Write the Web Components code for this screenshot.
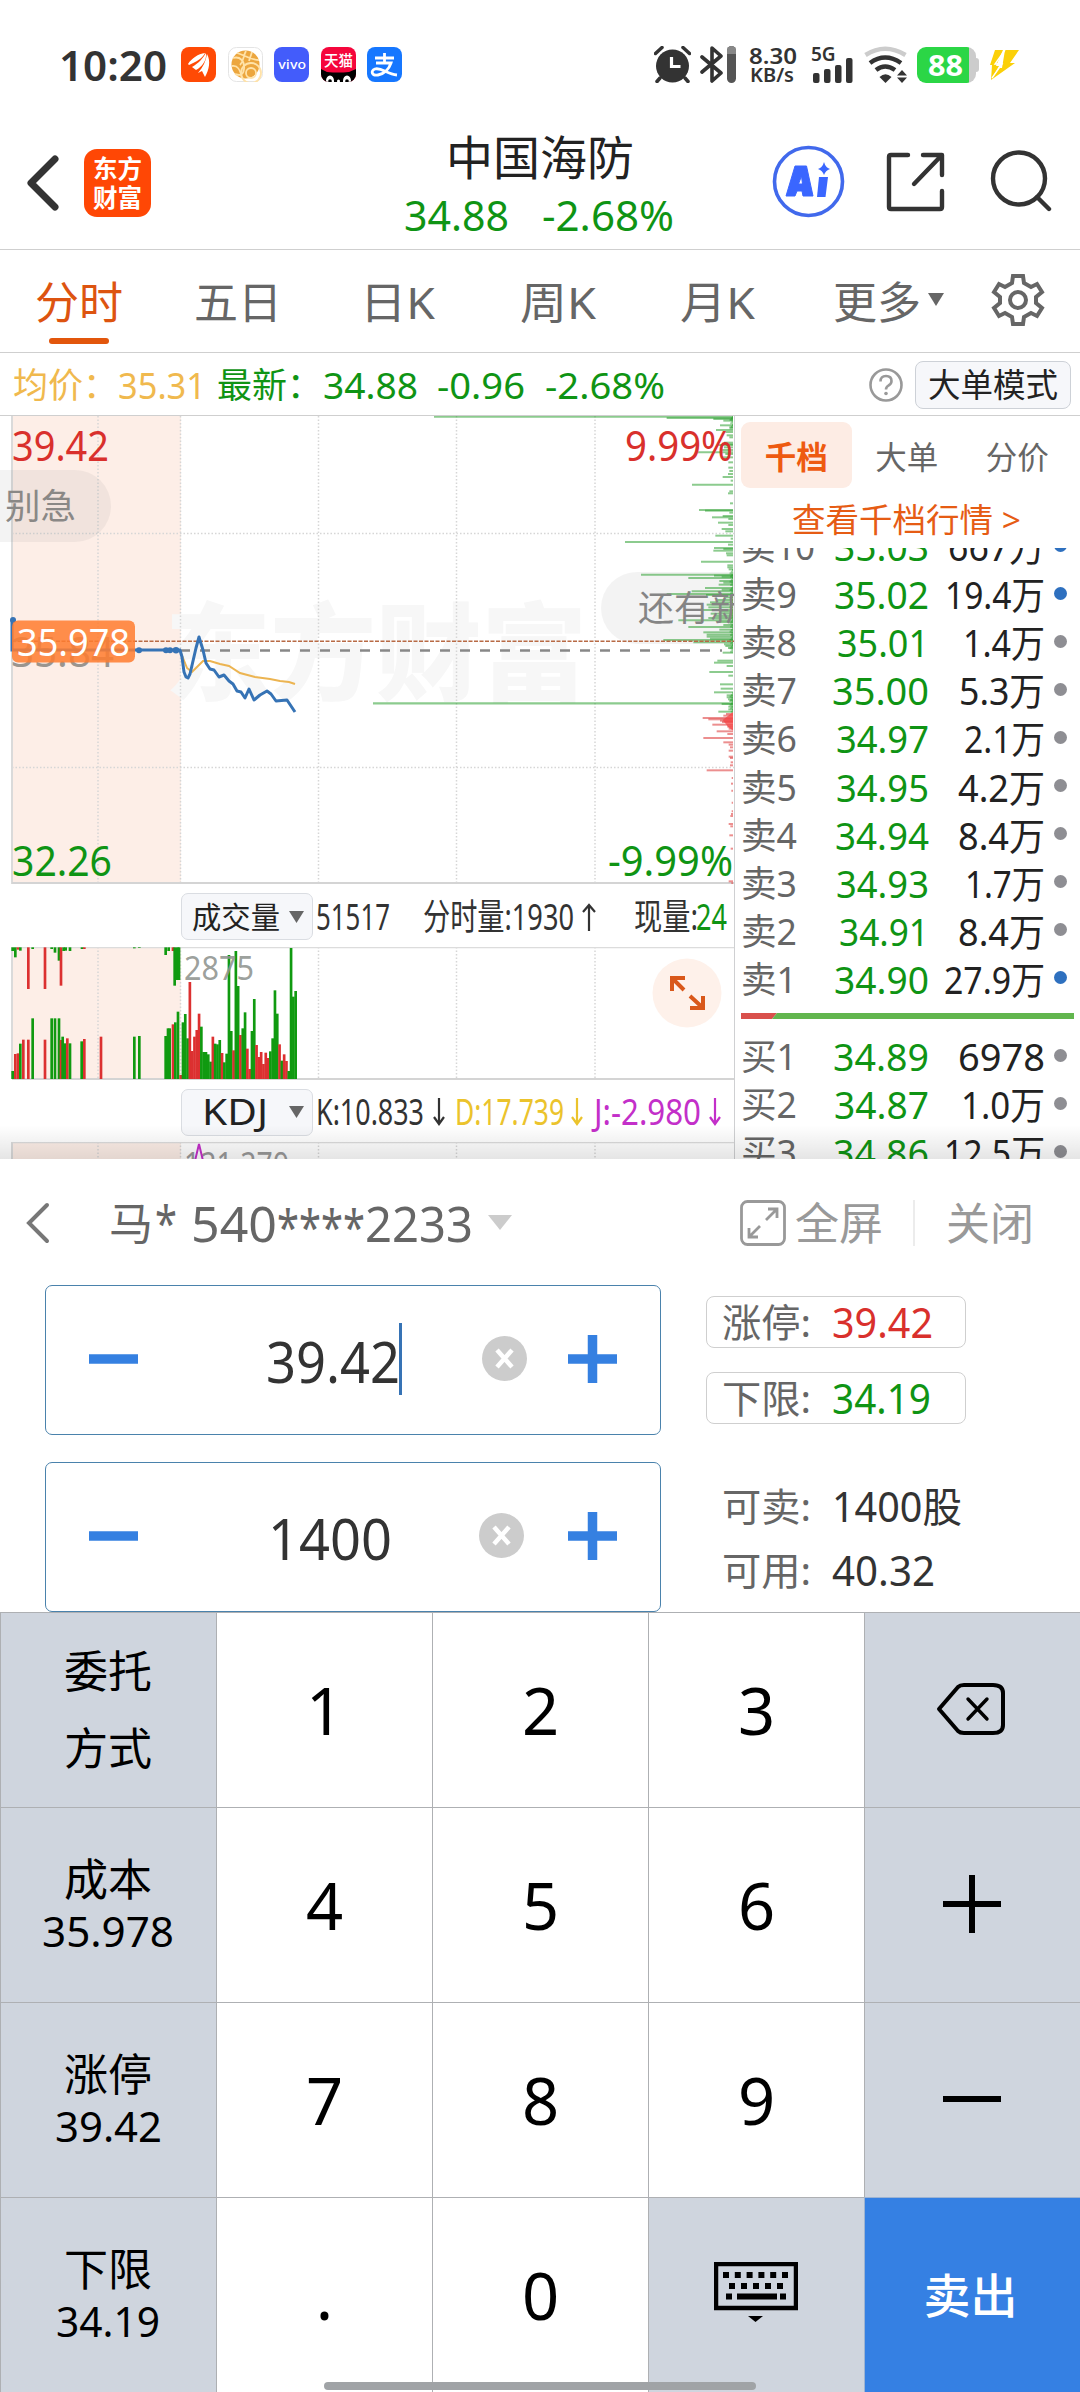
<!DOCTYPE html>
<html lang="zh-CN">
<head>
<meta charset="utf-8">
<title>中国海防</title>
<style>
html,body{margin:0;padding:0;background:#fff}
body{width:1080px;height:2392px;overflow:hidden;font-family:"Noto Sans","Noto Sans CJK SC",sans-serif;color:#333}
</style>
</head>
<body>
<stock-app></stock-app>
<script>
const G='#0f9414',R='#d9302c';
function define(name,css,html,after){
  customElements.define(name,class extends HTMLElement{
    connectedCallback(){
      if(this.shadowRoot)return;
      const root=this.attachShadow({mode:'open'});
      root.innerHTML='<style>*{box-sizing:border-box}svg{display:block;flex:none}:host{display:block;box-sizing:border-box}'+css+'</style>'+(typeof html==='function'?html(this):html);
      if(after)after(this,root);
    }
  });
}

/* Inline label stretched to an exact advance width */
define('fit-text',':host{display:inline-block;white-space:nowrap;flex:none}span{display:inline-block;transform-origin:0 50%}','<span><slot></slot></span>',(el,root)=>{
  const w=+el.getAttribute('w'),s=root.querySelector('span');
  const fit=()=>{s.style.transform='none';el.style.width='auto';const n=s.getBoundingClientRect().width;if(n){s.style.transform=`scaleX(${w/n})`;el.style.width=w+'px';}};
  fit();requestAnimationFrame(fit);
});

define('status-bar',`
:host{height:110px;padding:19px 60px 0 59px;display:flex;align-items:center;color:#333}
.time{font-size:42px;font-weight:600;line-height:90px}
.apps{display:flex;gap:11.6px;margin-left:14px}
.sp{flex:1}
.net{font-weight:600;text-align:center;margin-left:10px;width:48px}
.net div{line-height:20px;height:20px;white-space:nowrap}
.sig{margin-left:16px;width:44px}
.sig b{display:block;font-size:19px;line-height:14px;font-weight:600;height:13px}
.bat{width:63px;height:36px;margin-left:9px;display:flex;align-items:center}
.bat div{width:59px;height:36px;border-radius:9px;background:linear-gradient(90deg,#2bd646 52px,#ccc 52px);color:#fff;font-weight:700;font-size:29px;line-height:35px;padding-left:11px}
.bat i{width:3px;height:14px;background:#ccc;border-radius:0 3px 3px 0}
`,`
<fit-text class="time" w="108">10:20</fit-text>
<div class="apps">
<svg width="35" height="35"><rect width="35" height="35" rx="8" fill="#ff4a05"/><path d="M7 17C11 11 17 7 24 6C22 11 15 15 8 18ZM11 20C18 16 22 11 25 6C26 13 21 20 15 23ZM17 26C22 20 25 14 26 7C30 14 28 23 24 30L21 24Z" fill="#fff"/></svg>
<svg width="35" height="35"><rect x=".5" y=".5" width="34" height="34" rx="8" fill="#fff" stroke="#e4e4e4"/><circle cx="17.500" cy="17.500" r="14" fill="#eca63e"/><g fill="none" stroke="#ffe2a8" stroke-width="1.800"><circle cx="23" cy="26" r="5"/><circle cx="23" cy="26" r="10"/><path d="M5 11C12 9 17 14 16 22S10 28 7 27M9 6C17 8 22 13 31 13M18 4C15 9 16 14 12 18M24 5L21 14M4 19C9 18 12 21 14 31"/></g></svg>
<svg width="35" height="35"><rect width="35" height="35" rx="8" fill="#435cfb"/><text x="4" y="21.500" fill="#fff" font-family="Inter" font-weight="500" font-size="11.500" textLength="28" lengthAdjust="spacingAndGlyphs">vivo</text></svg>
<svg width="35" height="35"><clipPath id="c"><rect width="35" height="35" rx="8"/></clipPath><g clip-path="url(#c)"><rect width="35" height="35" fill="#f5063c"/><path d="M0 22L6 25Q17 26 28 25L35 22V35H0Z" fill="#000"/><ellipse cx="9" cy="34" rx="4" ry="5.500" fill="#fff"/><ellipse cx="26" cy="34" rx="4" ry="5.500" fill="#fff"/><circle cx="9" cy="34" r="1.800"/><circle cx="26" cy="34" r="1.800"/><circle cx="17.500" cy="34" r="1.500" fill="#fff"/><text x="3" y="18.500" fill="#fff" font-family="Noto Sans CJK SC" font-weight="500" font-size="14.500">天猫</text></g></svg>
<svg width="35" height="35"><rect width="35" height="35" rx="8" fill="#1677ff"/><path d="M8 11H27M17.500 6V16M9 16H24C22 22 17 27 11 28C5 29 3 24 8 22C14 20 20 27 30 28" fill="none" stroke="#fff" stroke-width="2.800"/></svg>
</div>
<div class="sp"></div>
<svg width="37" height="37" viewBox="0 0 37 37"><circle cx="18.500" cy="20" r="16.500" fill="#333"/><path d="M1.500 7.500L8 1.500M35.500 7.500L29 1.500M6 32L3 35.500M31 32L34 35.500" stroke="#333" stroke-width="3.500" stroke-linecap="round"/><path d="M17.500 11V20.500H26.500" fill="none" stroke="#fff" stroke-width="3.200"/></svg>
<svg width="37" height="37" viewBox="0 0 37 37" style="margin-left:9px"><path d="M2 11L21 27L12 35V2L21 10L2 26" fill="none" stroke="#333" stroke-width="3.600" stroke-linejoin="round" stroke-linecap="round"/><rect x="27" y="0" width="9" height="37" rx="4.500" fill="#555"/><path d="M27 8V4.500a4.500 4.500 0 0 1 9 0V8Z" fill="#888"/></svg>
<div class="net"><div style="font-size:22px"><fit-text w="48">8.30</fit-text></div><div style="font-size:19.500px"><fit-text w="44">KB/s</fit-text></div></div>
<div class="sig"><b>5G</b><svg width="44" height="25" style="margin-top:-2px" fill="#333"><rect x="2" y="15" width="6.500" height="10" rx="2"/><rect x="13" y="11" width="6.500" height="14" rx="2"/><rect x="24" y="7" width="6.500" height="18" rx="2"/><rect x="35" y="0" width="6.500" height="25" rx="2"/></svg></div>
<svg width="44" height="37" viewBox="0 0 44 37" style="margin-left:9px" fill="none" stroke-width="4.500"><path d="M1.500 9Q21 -3.500 41.500 9" stroke="#ccc"/><path d="M6 17Q21 6 37 17" stroke="#333"/><path d="M12 24Q21 17 31 24" stroke="#333"/><path d="M15.500 31Q21.500 25.500 27.500 31L21.500 37Z" fill="#333"/><path d="M33 29.500L38 24L43 29.500ZM33 31.500L38 37L43 31.500Z" fill="#333"/></svg>
<div class="bat"><div><fit-text w="35">88</fit-text></div><i></i></div>
<svg width="30" height="32" viewBox="0 0 30 32" style="margin-left:10px"><path d="M5 1H13L6 17H9L1 31L2 16H0ZM15 1H29L20 14H25L1 31L9 19H12Z" fill="#fbd009"/><path d="M15 1L5 15H12L2 29" fill="none" stroke="#fff" stroke-width="1.400"/></svg>
`);

define('stock-header',`
:host{height:140px;border-bottom:1px solid #cfcfcf;display:grid;grid-template-columns:1fr auto 1fr}
.l{display:flex;align-items:center;padding:6px 0 0 24px;gap:22px}
.logo{width:67px;height:68px;border-radius:13px;background:#ff4705;color:#fff;font-family:"Noto Sans CJK SC";font-weight:700;font-size:24.500px;line-height:29px;text-align:center;padding-top:4px}
.m{text-align:center;padding-top:17px}
.t{font-size:47px;line-height:60px;height:60px;color:#222}
.p{font-size:42px;line-height:56px;color:${G};display:flex;justify-content:center;gap:33px;margin-left:-2px}
.r{display:flex;align-items:center;justify-content:flex-end;padding:5px 28px 0 0}
`,`
<div class="l"><svg width="38" height="62" viewBox="0 0 38 62"><path d="M31 7L7 31L31 55" fill="none" stroke="#333" stroke-width="7" stroke-linecap="round" stroke-linejoin="round"/></svg><div class="logo">东方<br>财富</div></div>
<div class="m"><div class="t">中国海防</div><div class="p"><fit-text w="105">34.88</fit-text><fit-text w="132">-2.68%</fit-text></div></div>
<div class="r">
<svg width="74" height="74" viewBox="0 0 74 74"><circle cx="36.500" cy="36.500" r="34" fill="none" stroke="#4169ec" stroke-width="3.600"/><path d="M14 51L23 21H34.500L41 51H31L30 46H25L23 51ZM26.500 39H30.500L29.500 31Z" fill="#3a66ff" stroke="#3a66ff" stroke-width="1" stroke-linejoin="round" fill-rule="evenodd"/><path d="M47 32H56L53.500 52H45Z" fill="#3a66ff"/><path d="M52 17Q53.500 22.500 58 24Q53.500 25.500 52 30Q50.500 25.500 46 24Q50.500 22.500 52 17Z" fill="#3a66ff"/></svg>
<svg width="60" height="60" viewBox="0 0 60 60" style="margin-left:40px" fill="none" stroke="#333" stroke-width="4.400" stroke-linecap="round" stroke-linejoin="round"><path d="M22 3H5Q3 3 3 5V55Q3 57 5 57H54Q56 57 56 55V39M37 3H56V23M55 4L28 32"/></svg>
<svg width="62" height="64" viewBox="0 0 62 64" style="margin-left:44px" fill="none" stroke="#333" stroke-width="4.400" stroke-linecap="round"><circle cx="29" cy="28.500" r="26"/><path d="M47 47L59 59"/></svg>
</div>`);

define('period-tabs',`
:host{height:103px;border-bottom:1px solid #cfcfcf;display:flex;color:#666;font-size:44px;line-height:104px;padding-left:34px}
div{height:101px;white-space:nowrap}
.on{color:#dd5410;width:90px;display:flex;flex-direction:column;align-items:center}
.on b{font-weight:400;height:88px;line-height:104px}
.on i{width:60px;height:6px;border-radius:3px;background:#e2560c}
`,`<div class="on"><b>分时</b><i></i></div>
<div style="margin-left:70px;width:166px">五日</div><div style="width:160px"><fit-text w="75">日K</fit-text></div><div style="width:160px"><fit-text w="76">周K</fit-text></div><div style="width:153px"><fit-text w="75">月K</fit-text></div><div>更多</div>
<svg width="16" height="13" style="margin:43px 0 0 7px"><path d="M0 0H16L8 13Z" fill="#666"/></svg>
<svg width="54" height="56" viewBox="0 0 54 56" style="margin:22px 0 0 47px" fill="none" stroke="#666" stroke-width="4" stroke-linejoin="miter"><path d="M22 4H32L33 11L40 15L46 12L51 20L45 25V31L51 36L46 44L40 41L33 45L32 52H22L21 45L14 41L8 44L3 36L9 31V25L3 20L8 12L14 15L21 11Z"/><circle cx="27" cy="28" r="8"/></svg>`);

define('quote-line',`
:host{height:63px;border-bottom:1px solid #cfcfcf;display:flex;align-items:center;font-size:37px;line-height:60px;padding:1px 9px 0 13px;color:${G}}
small{font-size:35px}
.y{color:#f0b94e}
.b{width:156px;height:48px;border:1px solid #cdd1d7;border-radius:8px;background:#f6f7fa;color:#222;font-size:32.500px;line-height:46px;text-align:center;margin-left:12px}
.sp{flex:1}
`,`<small class="y"><fit-text w="105">均价：</fit-text></small><fit-text class="y" w="88">35.31</fit-text><small style="margin-left:11px"><fit-text w="105">最新：</fit-text></small><fit-text w="95" style="margin-left:1px">34.88</fit-text><fit-text w="88" style="margin-left:19px">-0.96</fit-text><fit-text w="120" style="margin-left:20px">-2.68%</fit-text><div class="sp"></div>
<svg width="34" height="34" viewBox="0 0 34 34" fill="none" stroke="#999"><circle cx="17" cy="17" r="15.500" stroke-width="2.600"/><path d="M11.500 13.500Q11.500 8 17 8T22.500 13Q22.500 16 19.500 17.500Q17 19 17 21.500" stroke-width="2.600"/><circle cx="17" cy="25.500" r="1.800" fill="#999" stroke="none"/></svg><div class="b">大单模式</div>`);

const T=(x,y,w,s,f,t,extra='')=>`<text x="${x}" y="${y}" font-size="${s}" fill="${f}" textLength="${w}" lengthAdjust="spacingAndGlyphs" ${extra}>${t}</text>`;
const vgrid=h=>`<g stroke="#d6d6d6" stroke-width="1.500" stroke-dasharray="1.500 2">${[98,180.5,318.5,456.5,595].map(x=>`<path d="M${x} 0V${h}"/>`).join('')}</g>`;

/* Resting-order depth: [row, left edge], both in thirds of a pixel from (360,410) */
const depthG=[[24,920],[27,1060],[32,1090],[46,1080],[52,1108],[60,1068],[66,1096],[76,1100],[82,1108],[98,1092],[103,1098],[105,1072],[112,1092],[120,1080],[127,1013],[132,1096],[142,1085],[157,1105],[173,1105],[183,1108],[192,1104],[201,1088],[212,1112],[224,996],[244,1108],[250,1104],[280,1110],[300,1017],[302,1035],[308,1108],[318,1088],[322,1056],[327,1105],[338,1074],[345,1105],[357,1085],[364,1096],[377,1066],[386,1112],[396,795],[404,1104],[414,1062],[417,1090],[422,1060],[430,1098],[436,1100],[455,1023],[466,1102],[472,1102],[478,1106],[494,843],[497,1062],[500,1085],[504,985],[513,1078],[518,1090],[524,1076],[534,1035],[539,1085],[544,995],[552,920],[555,1038],[562,1092],[570,1072],[577,1050],[584,1040],[592,1045],[600,1012],[605,1082],[611,1052],[618,1066],[624,1045],[631,955],[636,1075],[645,1090],[651,985],[659,1078],[667,1030],[674,1040],[680,1040],[686,1050],[690,910],[697,1000],[703,1092],[708,1096],[714,1104],[728,1088],[752,1072],[758,1062],[768,1100],[786,1048],[797,1105],[823,1080],[836,1082],[847,1062],[856,1100],[862,1100],[868,1104],[873,1108],[882,1085],[890,1105],[898,1105],[905,1075]];
const depthR=[[912,1098],[917,1090],[924,1028],[928,1045],[932,1080],[936,1086],[944,1057],[950,1102],[956,1106],[964,1070],[972,1102],[984,1030],[997,1090],[1004,1106],[1012,1110],[1022,1106],[1040,1106],[1044,1110],[1057,1112],[1066,1110],[1081,1040],[1104,1115],[1121,1113],[1142,1114],[1178,1115],[1204,1115],[1212,1113],[1218,1111],[1242,1106],[1249,1111],[1276,1108],[1316,1112],[1414,1106],[1420,1114]];
function filler(a,b){let s='';for(let y=a,i=0;y<b;y+=5,i++){const w=3+((i*7)%5)*1.8;s+=`<path d="M${1119-w} ${y}H1119"/>`;}return s;}

define('price-chart',`:host{width:734px;height:469px;position:relative;overflow:hidden}svg{width:734px;height:469px}`,()=>{
 const seg=a=>a.map(([y,x])=>`<path d="M${x} ${y}H1119"/>`).join('');
 return `<svg viewBox="0 415 734 469"><rect x="12" y="416" width="169" height="468" fill="#fdeee7"/>
 ${T(165,692,422,106,'#f7f7f7','东方财富','font-family="Noto Sans CJK SC" font-weight="900"')}
 <g transform="translate(0 416)">${vgrid(468)}</g>
 <g stroke="#d6d6d6" stroke-width="1.500" stroke-dasharray="1.500 2"><path d="M12 533.500H734M12 767.500H734"/></g>
 <path d="M12 416V884" stroke="#dadada" stroke-width="2"/><path d="M12 883H734" stroke="#d4d4d4" stroke-width="2"/>
 <rect x="-60" y="470" width="171" height="72" rx="36" fill="#777" fill-opacity=".09"/>${T(5,518.5,71,35,'#8a8886','别急')}
 <rect x="601" y="572" width="200" height="72" rx="36" fill="#777" fill-opacity=".09"/>
 <g transform="translate(360 410) scale(.33333)" stroke-width="6" fill="none"><g stroke="#2da032" stroke-opacity=".55"><path d="M222 20H1119"/><path d="M39 880H1119" stroke-width="7"/>${seg(depthG)}</g><g stroke="#0f9414" stroke-opacity=".4">${filler(480,730)}${filler(20,60)}${filler(850,908)}</g><g stroke="#e04545" stroke-opacity=".6">${seg(depthR)}</g><path d="M1119 906L1088 930L1104 950L1119 962Z" fill="#f54040" fill-opacity=".7"/></g>
 ${T(638,621,108,35,'#858585','还有新')}
 <path d="M180 650.500H722" stroke="#888" stroke-width="2.600" stroke-dasharray="10 10"/>
 <path d="M12 641.300H734" stroke="#b86a45" stroke-width="1.500" stroke-dasharray="4 1.500"/>
 ${T(12,460.5,97,42,R,'39.42')}${T(625,460.5,108,42,R,'9.99%')}${T(12,875.5,100,42,G,'32.26')}${T(608,875.5,125,42,G,'-9.99%')}
 ${T(11,667,103,42,'#9a958f','35.84')}
 <path d="M12 620V650H181" stroke="#3673b5" stroke-width="3" fill="none"/>
 <g fill="#3673b5"><circle cx="13" cy="620" r="3"/><circle cx="139" cy="650.300" r="3"/><circle cx="166" cy="650.300" r="3"/><circle cx="170" cy="650.300" r="3"/><circle cx="176" cy="650.300" r="3.300"/></g>
 <path d="M181 653L187 668L192 672L199 665L203 661L210 661L220 664L229 666L240 673L255 677L270 679L280 681L289 682L295 684" fill="none" stroke="#ecb451" stroke-width="2"/>
 <path d="M180 650L182 657L184 672L186 677L188 678L190 674L196 648L199 637L203 650L206 663L210 669L214 670L219 677L224 675L229 681L233 684L237 691L241 692L245 698L249 689L254 700L260 695L267 691L271 694L276 701L287 700L291 706L295 712" fill="none" stroke="#3673b5" stroke-width="3" stroke-linejoin="round"/>
 <rect x="12" y="620.500" width="123" height="42" rx="6" fill="#ff7d30" fill-opacity=".86"/>
 ${T(17,656,113,39,'#fff','35.978')}
 </svg>`;});

define('indicator-row',`
:host{height:63px;width:734px;display:flex;align-items:center;font-size:36px;line-height:60px;padding:2px 0 0 181px;color:#333}
.b{width:132px;height:47px;background:#f6f7fa;border:1px solid #dadde2;border-radius:7px;color:#222;display:flex;align-items:center;justify-content:space-between;padding:0 8px 0 10px;font-size:30px;line-height:42px;flex:none}
`,'<div class="b"><slot name="name"></slot><svg width="15" height="12"><path d="M0 0H15L7.500 12Z" fill="#666"/></svg></div><slot></slot>');

const barsTop=[[34,213,0],[42,232,0],[50,209,1],[57,212,0],[81,327,1],[94,207,0],[131,327,1],[151,207,0],[161,218,0],[173,242,0],[179,317,1],[187,213,0],[193,212,0],[206,213,0],[242,207,0],[249,207,1],[399,205,0],[414,204,0],[493,225,0],[502,213,0],[515,213,1],[520,317,0],[528,300,0],[533,300,0]];
const barsBot=[[34,573,0],[42,522,1],[50,520,1],[57,491,0],[66,479,1],[81,479,1],[94,415,0],[131,479,1],[151,415,0],[161,415,0],[173,415,0],[179,480,1],[184,470,0],[191,490,0],[198,475,1],[206,490,0],[241,484,0],[249,477,1],[299,470,1],[399,470,0],[414,468,0],[493,468,0],[500,445,0],[505,445,0],[515,433,1],[522,427,0],[530,395,0]];
const session='585r427g402g475g306r513r470r450r401r440g516g516g523g545g470r491g493g480g519r547g521g225g453g511r213g318g465r445g397g506r567r453g357g495r531r516r552r518r534r514g475g331g401g493r542g523r543r573g204g350g333g'.match(/\d+[rg]/g);
session.forEach((v,i)=>barsBot.push([538+i*6.9,parseInt(v),v.endsWith('r')?1:0]));

define('volume-chart',`:host{width:734px;height:133px;position:relative}svg.c{width:734px;height:133px}.x{position:absolute;left:652px;top:11px}`,()=>{
 const f=c=>c?'#dc3030':'#109a10';
 return `<svg class="c" viewBox="0 947 734 133"><rect x="12" y="947" width="169" height="132" fill="#fdeee7"/><g transform="translate(0 947)">${vgrid(132)}</g><path d="M12 947.500H734" stroke="#dcdcdc" stroke-width="1.500"/><path d="M12 947V1079" stroke="#dadada" stroke-width="2"/><path d="M12 1079H734" stroke="#d4d4d4" stroke-width="2"/>
 <g transform="translate(0 880) scale(.33333)">${barsTop.map(b=>`<rect x="${b[0]}" y="202" width="8" height="${b[1]-202}" fill="${f(b[2])}"/>`).join('')}${barsBot.map(b=>`<rect x="${b[0]}" y="${b[1]}" width="8" height="${597-b[1]}" fill="${f(b[2])}"/>`).join('')}</g>
 ${T(184,980,70,32,'#8f9490','2875','fill-opacity=".9"')}</svg>
 <svg class="x" width="70" height="70" viewBox="0 0 70 70"><circle cx="35" cy="35" r="34.500" fill="#fef1ea"/><path d="M20 33V20H33M20 20L32 32M51 38V50H38M51 50L38 38" fill="none" stroke="#d9581a" stroke-width="4"/></svg>`;});

define('kdj-chart',`:host{width:734px;height:17px;overflow:hidden}svg{width:734px;height:17px}`,`<svg viewBox="0 1142 734 17"><rect x="12" y="1142" width="169" height="17" fill="#fdeee7"/><g transform="translate(0 1142)">${vgrid(17)}</g><path d="M12 1142.500H734" stroke="#dcdcdc" stroke-width="1.500"/><path d="M12 1142V1159" stroke="#dadada" stroke-width="2"/>${T(184,1175.5,105,32,'#999','121.270')}<path d="M194 1165L199 1144L204 1165" fill="none" stroke="#c32fc9" stroke-width="2"/></svg>`);

define('book-row',`
:host{height:48.1px;display:flex;align-items:center;padding:0 13px 0 6px;line-height:48px;font-size:37.500px}
.n{color:#666;font-size:36px;width:86px;flex:none}
.p{color:${G};width:102px;display:flex;justify-content:flex-end}.v{color:#222;flex:1;display:flex;justify-content:flex-end}
i{width:13px;height:13px;border-radius:50%;background:#8e8e93;margin:-4px 0 0 9px;flex:none}:host([big]) i{background:#2e70bf}
`,el=>{const g=k=>el.getAttribute(k),n=g('n');
return `<div class="n"><fit-text w="${n.length>2?74:56}">${n}</fit-text></div><div class="p"><fit-text w="${g('pw')}">${g('p')}</fit-text></div><div class="v"><fit-text w="${g('vw')}">${g('v')}</fit-text></div><i></i>`;});

const sell=[['10','35.03',95,'667万',97,1],['9','35.02',95,'19.4万',100,1],['8','35.01',92,'1.4万',82],['7','35.00',97,'5.3万',86],['6','34.97',93,'2.1万',81],['5','34.95',93,'4.2万',87],['4','34.94',94,'8.4万',87],['3','34.93',93,'1.7万',80],['2','34.91',90,'8.4万',87],['1','34.90',95,'27.9万',101,1]];
const buy=[['1','34.89',96,'6978',87],['2','34.87',95,'1.0万',84],['3','34.86',96,'12.5万',101]];
const mk=(t,a)=>a.map(r=>`<book-row n="${t+r[0]}" p="${r[1]}" pw="${r[2]}" v="${r[3]}" vw="${r[4]}" ${r[5]?'big':''}></book-row>`).join('');
define('order-book',`
:host{flex:1;border-left:1px solid #cfd0d2;height:743px;overflow:hidden;display:flex;flex-direction:column}
.tabs{display:flex;margin:6px 0 0 6px;height:66px;flex:none}.tabs div{width:110.500px;text-align:center;font-size:31.500px;line-height:70px;color:#666}
.tabs .on{background:#fdece4;border-radius:9px;color:#ee5a10;font-weight:700}
.link{height:60px;line-height:64px;font-size:32.500px;color:#e65c14;padding-left:57px;flex:none;white-space:pre}
.s{height:458px;overflow:hidden;flex:none}.s>:first-child{margin-top:-25px}
svg{margin:7px 0 14px 6px}
`,`<div class="tabs"><div class="on">千档</div><div>大单</div><div>分价</div></div><div class="link"><fit-text w="229">查看千档行情 &gt;</fit-text></div><div class="s">${mk('卖',sell)}</div><svg width="333" height="6"><path d="M0 0H36L31 6H0Z" fill="#d9504c"/><path d="M36 0H333V6H31Z" fill="#62b64e"/></svg><div>${mk('买',buy)}</div>`);

define('market-view',`:host{height:743px;display:flex;position:relative;overflow:hidden}.c{width:734px;flex:none}.sh{position:absolute;left:0;right:0;bottom:0;height:34px;background:linear-gradient(180deg,rgba(0,0,0,0),rgba(0,0,0,.1))}`,`
<div class="c"><price-chart style="margin-top:-1px"></price-chart>
<indicator-row><fit-text slot="name" w="88">成交量</fit-text><fit-text w="74" style="margin-left:3px">51517</fit-text><fit-text w="151" style="margin-left:33px">分时量:1930</fit-text><svg width="14" height="28" viewBox="0 0 14 28" style="margin-left:8px" fill="none" stroke="#333" stroke-width="2.200"><path d="M7 28V2M1 9L7 2L13 9"/></svg><fit-text w="64" style="margin-left:38px">现量:</fit-text><fit-text w="31" style="color:${G};margin-left:-2px">24</fit-text></indicator-row>
<volume-chart></volume-chart>
<indicator-row style="height:62px"><fit-text slot="name" w="66" style="font-size:36px;margin-left:10px">KDJ</fit-text><fit-text w="108" style="margin-left:3px">K:10.833</fit-text><svg width="12" height="28" viewBox="0 0 12 28" style="margin-left:9px" fill="none" stroke="#333" stroke-width="2.200"><path d="M6 0V26M1 19L6 26L11 19"/></svg><fit-text w="109" style="margin-left:10px;color:#ebc32c">D:17.739</fit-text><svg width="12" height="28" viewBox="0 0 12 28" style="margin-left:7px" fill="none" stroke="#ebc32c" stroke-width="2.200"><path d="M6 0V26M1 19L6 26L11 19"/></svg><fit-text w="107" style="margin-left:11px;color:#c32fc9">J:-2.980</fit-text><svg width="12" height="28" viewBox="0 0 12 28" style="margin-left:8px" fill="none" stroke="#c32fc9" stroke-width="2.200"><path d="M6 0V26M1 19L6 26L11 19"/></svg></indicator-row>
<kdj-chart></kdj-chart></div><order-book></order-book><div class="sh"></div>`);

define('number-stepper',`
:host{width:616px;height:150px;border:1px solid #4a82ac;border-radius:7px;display:flex;align-items:center;padding:0 43px 3px 43px;color:#333;font-size:56px;line-height:76px}
.v{margin-top:4px}
.cur{width:3px;height:72px;background:#3673b5;margin-left:-1px}
.sp{flex:1}
`,el=>`<svg width="49" height="48"><path d="M0 24H49" stroke="#3580e1" stroke-width="9.500"/></svg><fit-text class="v" style="margin-left:${el.getAttribute('ml')}px" w="${el.getAttribute('vw')}">${el.getAttribute('value')}</fit-text>${el.hasAttribute('focused')?'<div class="cur"></div>':''}<div class="sp"></div><svg width="45" height="45" viewBox="0 0 45 45"><circle cx="22.500" cy="22.500" r="22.500" fill="#ccc"/><path d="M15 14L30 31M30 14L15 31" stroke="#fff" stroke-width="4.500"/></svg><svg width="49" height="48" style="margin-left:${el.getAttribute('gap')}px"><path d="M0 24H49M24.500 0V48" stroke="#3580e1" stroke-width="9.500"/></svg>`);

define('info-pair',`:host{display:flex;align-items:center;width:260px;height:52px;padding-left:16px;font-size:41px;line-height:50px;color:#333}:host([boxed]){border:1px solid #cfcfcf;border-radius:8px;padding-left:15px}.k{color:#666;font-size:38.500px;width:110px}`,
el=>`<div class="k"><fit-text w="89">${el.getAttribute('k')}:</fit-text></div><fit-text w="${el.getAttribute('vw')}" style="color:${el.getAttribute('c')||'#333'}">${el.getAttribute('v')}</fit-text>`);

define('trade-panel',`
:host{height:454px;background:#fff}
.h{height:126px;display:flex;align-items:center;padding:1px 0 0 24px;color:#666;font-size:49px;line-height:80px}
.g{color:#999;font-size:44px}
.b{display:flex;padding-left:45px;gap:45px}
.f{display:flex;flex-direction:column;gap:27px}
.i{display:flex;flex-direction:column;padding-top:11px}
`,`<div class="h"><svg width="28" height="42" viewBox="0 0 28 42"><path d="M23 3L5 21L23 39" fill="none" stroke="#777" stroke-width="4" stroke-linecap="round"/></svg>
<span style="font-size:44px;margin-left:57px"><fit-text w="44">马</fit-text></span><fit-text w="22" style="margin-left:2px">*</fit-text><fit-text w="86" style="margin-left:14px">540</fit-text><fit-text w="88" style="margin-top:9px">****</fit-text><fit-text w="108">2233</fit-text>
<svg width="24" height="15" style="margin-left:15px"><path d="M0 0H24L12 15Z" fill="#ccc"/></svg>
<svg width="46" height="46" viewBox="0 0 46 46" style="margin-left:228px" fill="none" stroke="#999" stroke-width="2.800"><rect x="1.500" y="1.500" width="43" height="43" rx="6"/><path d="M26 20L37 9M28 9H37V18M20 26L9 37M9 28V37H18"/></svg>
<span class="g" style="margin-left:9px">全屏</span><svg width="2" height="46" style="margin-left:30px"><rect width="2" height="46" fill="#ececec"/></svg><span class="g" style="margin-left:31px">关闭</span></div>
<div class="b"><div class="f"><number-stepper value="39.42" vw="134" ml="128" gap="41" focused></number-stepper><number-stepper value="1400" vw="124" ml="130" gap="44"></number-stepper></div>
<div class="i"><info-pair boxed k="涨停" v="39.42" vw="101" c="${R}"></info-pair><info-pair boxed k="下限" v="34.19" vw="99" c="${G}" style="margin-top:24px"></info-pair><info-pair k="可卖" v="1400股" vw="130" style="margin-top:56px"></info-pair><info-pair k="可用" v="40.32" vw="103" style="margin-top:11.500px"></info-pair></div></div>`);

define('pad-key',`:host{border-top:1px solid #aeb0b3;border-left:1px solid #aeb0b3;display:flex;flex-direction:column;align-items:center;justify-content:center;background:#fff;color:#000;font-size:65px;line-height:90px}
:host([fn]){background:#cfd5de;font-size:44px;line-height:52px;padding-right:1px}:host([wide]){line-height:77px}:host([sell]){background:#3580e3;border-color:#9db4d2;color:#fff;font-weight:500;font-size:47px;padding-right:4px}`,'<slot></slot>');

define('trade-keypad',`:host{height:780px;display:grid;grid-template-columns:repeat(5,216px);grid-template-rows:repeat(4,195px);position:relative;margin-top:-1px}
.home{position:absolute;left:324px;top:770px;width:432px;height:7.500px;border-radius:4px;background:#a0a3a6}fit-text{font-size:42px}`,`
<pad-key fn wide><span>委托</span><span>方式</span></pad-key><pad-key>1</pad-key><pad-key>2</pad-key><pad-key>3</pad-key><pad-key fn><svg width="70" height="54" viewBox="0 0 70 54" style="margin:-2px 2px 0 0" fill="none" stroke="#000" stroke-linejoin="round" stroke-linecap="round"><path d="M3 27L22 5Q24 3 28 3H57Q67 3 67 11V43Q67 51 57 51H28Q24 51 22 49Z" stroke-width="4"/><path d="M32 17L51 37M51 17L32 37" stroke-width="3.400"/></svg></pad-key>
<pad-key fn><span>成本</span><fit-text w="132">35.978</fit-text></pad-key><pad-key>4</pad-key><pad-key>5</pad-key><pad-key>6</pad-key><pad-key fn><svg width="58" height="58" style="margin:-2px 1px 0 0"><path d="M0 29H58M29 0V58" stroke="#000" stroke-width="6"/></svg></pad-key>
<pad-key fn><span>涨停</span><fit-text w="107">39.42</fit-text></pad-key><pad-key>7</pad-key><pad-key>8</pad-key><pad-key>9</pad-key><pad-key fn><svg width="58" height="58" style="margin:-2px 1px 0 0"><path d="M0 29H58" stroke="#000" stroke-width="6"/></svg></pad-key>
<pad-key fn><span>下限</span><fit-text w="104">34.19</fit-text></pad-key><pad-key>.</pad-key><pad-key>0</pad-key><pad-key fn><svg width="84" height="62" viewBox="0 0 84 62" style="margin-top:-5px"><rect x="2" y="2" width="80" height="44" fill="none" stroke="#000" stroke-width="4.500"/><path d="M9 13H75" stroke="#000" stroke-width="6" stroke-dasharray="6 5.800"/><path d="M15 24H70" stroke="#000" stroke-width="6" stroke-dasharray="6 6"/><path d="M12 34.500H18M23 34.500H63M66 34.500H72" stroke="#000" stroke-width="6"/><path d="M34 54H49L41.500 60Z"/></svg></pad-key><pad-key fn sell>卖出</pad-key><div class="home"></div>`);

define('stock-app',':host{width:1080px;height:2392px;overflow:hidden}','<status-bar></status-bar><stock-header></stock-header><period-tabs></period-tabs><quote-line></quote-line><market-view></market-view><trade-panel></trade-panel><trade-keypad></trade-keypad>');
</script>
</body>
</html>
